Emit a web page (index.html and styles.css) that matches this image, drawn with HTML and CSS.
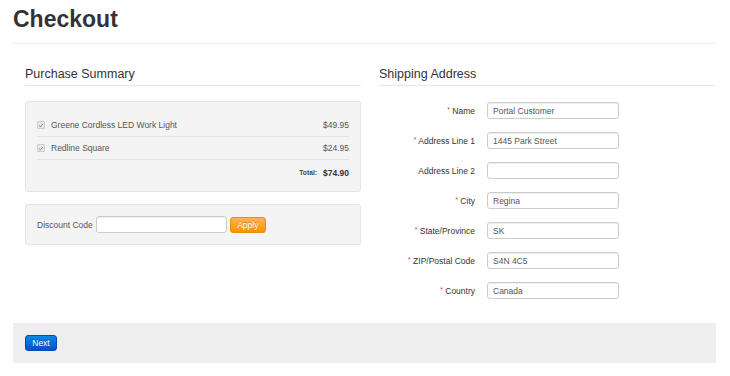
FILE: index.html
```html
<!DOCTYPE html>
<html lang="en">

<head>
  <meta charset="UTF-8">
  <meta name="viewport" content="width=device-width, initial-scale=1.0">
  <title>Checkout</title>
  <link rel="stylesheet" href="styles.css">
</head>

<body>
  <div class="page">
    <h1 class="pageTitle">Checkout</h1>

    <div class="checkoutRow">
      <div class="column">
        <h3 class="sectionTitle">Purchase Summary</h3>

        <div class="well summary">
          <div class="lineItem">
            <span class="check"><svg viewBox="0 0 8 8" width="7" height="7"><path d="M1.5 4.2 L3.2 5.8 L6.5 2" fill="none" stroke="#777" stroke-width="1.1"/></svg></span>
            <span class="itemName">Greene Cordless LED Work Light</span>
            <span class="itemPrice">$49.95</span>
          </div>
          <div class="lineItem">
            <span class="check"><svg viewBox="0 0 8 8" width="7" height="7"><path d="M1.5 4.2 L3.2 5.8 L6.5 2" fill="none" stroke="#777" stroke-width="1.1"/></svg></span>
            <span class="itemName">Redline Square</span>
            <span class="itemPrice">$24.95</span>
          </div>
          <div class="totalRow">
            <span class="totalLabel">Total:</span>
            <span class="totalValue">$74.90</span>
          </div>
        </div>

        <div class="well discount">
          <label class="discountLabel" for="discount">Discount Code</label>
          <input class="textInput discountInput" id="discount" type="text">
          <button class="btn btnWarning">Apply</button>
        </div>
      </div>

      <div class="column">
        <h3 class="sectionTitle">Shipping Address</h3>

        <div class="addressForm">
          <label class="fieldLabel"><span class="req">*</span> Name</label>
          <input class="textInput" type="text" value="Portal Customer">

          <label class="fieldLabel"><span class="req">*</span> Address Line 1</label>
          <input class="textInput" type="text" value="1445 Park Street">

          <label class="fieldLabel">Address Line 2</label>
          <input class="textInput" type="text" value="">

          <label class="fieldLabel"><span class="req">*</span> City</label>
          <input class="textInput" type="text" value="Regina">

          <label class="fieldLabel"><span class="req">*</span> State/Province</label>
          <input class="textInput" type="text" value="SK">

          <label class="fieldLabel"><span class="req">*</span> ZIP/Postal Code</label>
          <input class="textInput" type="text" value="S4N 4C5">

          <label class="fieldLabel"><span class="req">*</span> Country</label>
          <input class="textInput" type="text" value="Canada">
        </div>
      </div>
    </div>

    <div class="formActions">
      <button class="btn btnPrimary">Next</button>
    </div>
  </div>
</body>

</html>
```

FILE: styles.css
```css
body {
  font-family: "Liberation Sans", Arial, sans-serif;
  font-size: 8.5px;
  line-height: 14px;
  color: #333;
  background-color: #fff;
  margin: 0;
  padding: 5px 0 0 0;
}

.page {
  margin: 0 14px 0 13px;
}

.pageTitle {
  margin: 0;
  font-size: 23px;
  line-height: 28px;
  font-weight: bold;
  color: #333;
  padding-bottom: 10px;
  border-bottom: 1px solid #f0f0f0;
}

.checkoutRow {
  display: flex;
  gap: 18px;
  padding-left: 12px;
  margin-top: 22px;
}

.column {
  width: 336px;
}

.sectionTitle {
  margin: 0;
  font-size: 12.5px;
  line-height: 16px;
  font-weight: normal;
  color: #333;
  padding-bottom: 3px;
  border-bottom: 1px solid #e8e8e8;
}

.well {
  background-color: #f4f4f4;
  border: 1px solid #e3e3e3;
  border-radius: 3px;
}

.summary {
  margin-top: 15px;
  padding: 12px 11px 5px 11px;
}

.lineItem {
  display: flex;
  align-items: center;
  height: 22px;
  border-bottom: 1px solid #e2e2e2;
  color: #555;
}

.check {
  box-sizing: border-box;
  width: 8px;
  height: 8px;
  border: 1px solid #ccc;
  background-color: #e6e6e6;
  border-radius: 1px;
  margin-right: 6px;
  display: flex;
  align-items: center;
  justify-content: center;
}

.itemName {
  flex: 1;
}

.itemPrice {
  text-align: right;
}

.totalRow {
  display: flex;
  justify-content: flex-end;
  align-items: center;
  height: 26px;
  gap: 6px;
}

.totalLabel {
  font-size: 6.7px;
  font-weight: bold;
  color: #444;
}

.totalValue {
  font-weight: bold;
  color: #333;
}

.discount {
  margin-top: 12px;
  padding: 11px;
  display: flex;
  align-items: center;
}

.discountLabel {
  color: #555;
  margin-right: 3px;
}

.textInput {
  box-sizing: border-box;
  height: 17px;
  width: 132px;
  padding: 0 5px;
  margin: 0;
  font-family: "Liberation Sans", Arial, sans-serif;
  font-size: 8.5px;
  color: #555;
  background-color: #fff;
  border: 1px solid #ccc;
  border-radius: 3px;
  box-shadow: inset 0 1px 1px rgba(0, 0, 0, 0.075);
}

.discountInput {
  width: 131px;
}

.btn {
  box-sizing: border-box;
  height: 16px;
  padding: 0;
  font-family: "Liberation Sans", Arial, sans-serif;
  font-size: 8.5px;
  line-height: 14px;
  color: #fff;
  border-radius: 3px;
  cursor: pointer;
  text-shadow: 0 -1px 0 rgba(0, 0, 0, 0.25);
}

.btnWarning {
  margin-left: 3px;
  width: 36px;
  background-image: linear-gradient(to bottom, #fbb450, #f89406);
  border: 1px solid #e8900a;
}

.btnPrimary {
  width: 32px;
  background-image: linear-gradient(to bottom, #0a88e0, #0450cc);
  border: 1px solid #0548b8;
}

.addressForm {
  margin-top: 16px;
  display: grid;
  grid-template-columns: 96px 132px;
  column-gap: 12px;
  row-gap: 13px;
  align-items: center;
}

.fieldLabel {
  text-align: right;
  color: #333;
}

.req {
  color: #d9413c;
  font-size: 7px;
  vertical-align: 2px;
}

.formActions {
  margin-top: 24px;
  background-color: #eee;
  height: 40px;
  padding: 12px 12px 0 12px;
  box-sizing: border-box;
}
```
